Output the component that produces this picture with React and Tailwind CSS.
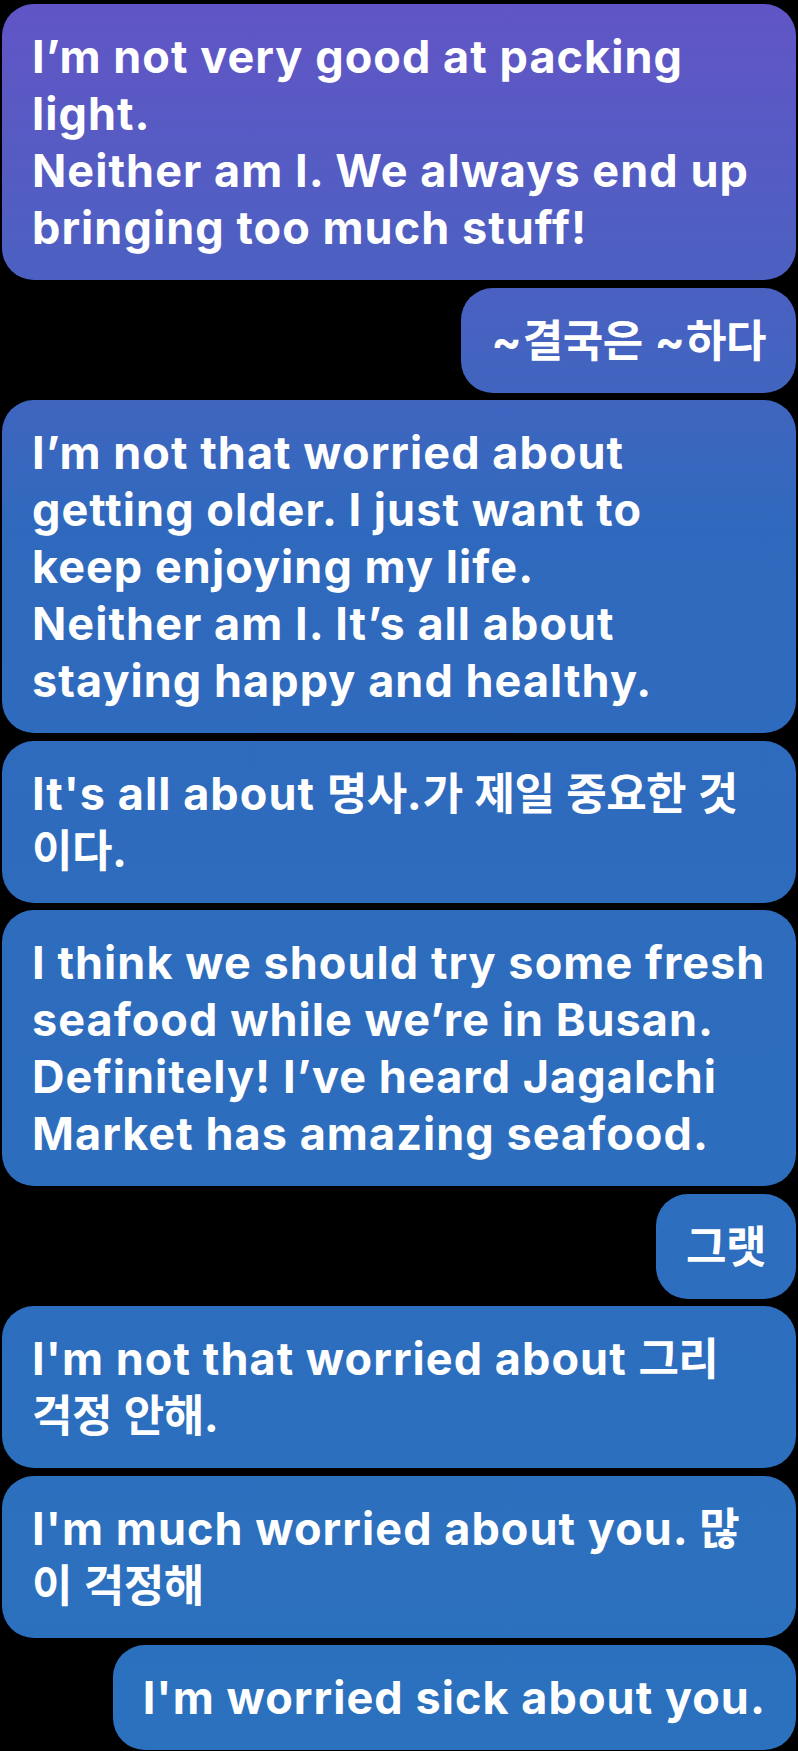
import React from 'react';

// chat bubbles, lines kept as in the screenshot
const messages = [
    { side: 'left', lines: ['I’m not very good at packing', 'light.', 'Neither am I. We always end up', 'bringing too much stuff!'] },
    { side: 'right', lines: ['~결국은 ~하다'] },
    {
        side: 'left',
        lines: [
            'I’m not that worried about',
            'getting older. I just want to',
            'keep enjoying my life.',
            'Neither am I. It’s all about',
            'staying happy and healthy.',
        ],
    },
    { side: 'left', lines: ["It's all about 명사.가 제일 중요한 것", '이다.'] },
    {
        side: 'left',
        lines: [
            'I think we should try some fresh',
            'seafood while we’re in Busan.',
            'Definitely! I’ve heard Jagalchi',
            'Market has amazing seafood.',
        ],
    },
    { side: 'right', lines: ['그랫'] },
    { side: 'left', lines: ["I'm not that worried about 그리", '걱정 안해.'] },
    { side: 'left', lines: ["I'm much worried about you. 많", '이 걱정해'] },
    { side: 'right', lines: ["I'm worried sick about you."] },
];

// hangul runs get their own size so latin can be a bit wider
const renderLine = (line) =>
    line.split(/([\u3131-\u318E\uAC00-\uD7A3]+)/).map((part, i) =>
        /[\u3131-\u318E\uAC00-\uD7A3]/.test(part) ? (
            <span key={i} className="text-[44px] font-semibold leading-[40px] tracking-[-0.5px]">
                {part}
            </span>
        ) : (
            <span key={i}>{part}</span>
        )
    );

const Bubble = ({ side, lines }) => {
    const isRight = side === 'right';
    return (
        <div
            className={`${isRight ? 'self-end' : 'w-full'} rounded-[32px] bg-fixed bg-linear-to-b from-[#6155c6] from-0% via-[#2f69bd] via-30% to-[#2b71be] to-100% px-[30px] py-[24px] text-white`}
        >
            {lines.map((line, i) => (
                <div key={i} className="h-[57px] whitespace-nowrap leading-[57px]">
                    {renderLine(line)}
                </div>
            ))}
        </div>
    );
};

const App = () => {
    return (
        <div
            className="min-h-[1751px] w-[798px] bg-black px-[2px] pt-[4px] text-[45px] font-bold tracking-[1.05px]"
            style={{ fontFamily: 'Inter, "Noto Sans CJK KR", sans-serif' }}
        >
            <div className="flex flex-col gap-[7.5px]">
                {messages.map((m, i) => (
                    <Bubble key={i} side={m.side} lines={m.lines} />
                ))}
            </div>
        </div>
    );
};

export default App;
